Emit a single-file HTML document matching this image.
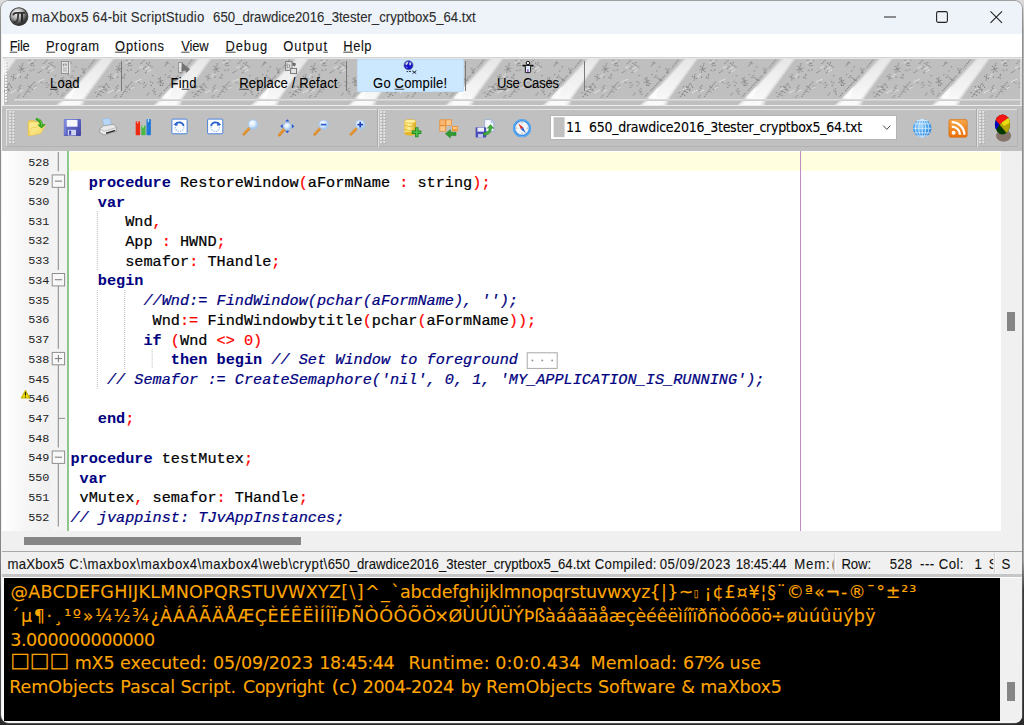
<!DOCTYPE html>
<html><head><meta charset="utf-8"><title>maXbox5</title>
<style>
html,body{margin:0;padding:0}
body{width:1024px;height:725px;position:relative;overflow:hidden;background:linear-gradient(180deg,#dcdcdc 0,#b4b4b4 30px,#a4a4a4 560px,#3a3a3a 590px,#2a2a2a 100%);font-family:"Liberation Sans",sans-serif}
.t{position:absolute;white-space:pre;margin:0;padding:0;transform-origin:0 0;-webkit-text-stroke:0.1px currentColor}
.t u{text-decoration:underline;text-underline-offset:1px;text-decoration-thickness:1px;text-decoration-color:#444}
#win{position:absolute;left:1.4px;top:0.6px;width:1021px;height:722px;background:#f0f0f0;border-radius:8px;overflow:hidden;box-shadow:0 0 0 1px rgba(110,110,110,0.55)}
.code{position:absolute;left:70.4px;white-space:pre;font:15.23px/19.72px "Liberation Mono",monospace;color:#000;height:19.72px;-webkit-text-stroke:0.22px currentColor}
.code b{-webkit-text-stroke:0.05px currentColor}
.code b{color:#000080}
.code i{color:#000080}
.code s{color:#ff0000;text-decoration:none}
.code em{color:#ff0000;font-style:normal}
.ln{position:absolute;left:20px;width:29.3px;text-align:right;font:11.8px/19.72px "Liberation Mono",monospace;color:#222;letter-spacing:-0.1px;height:19.72px}
.con{position:absolute;left:11px;white-space:pre;color:#f5a30a;font:17.5px/24px "Liberation Sans",sans-serif}
svg{position:absolute;overflow:visible}
</style></head><body>

<div id="win"></div>
<div id="clip" style="position:absolute;left:0;top:0;width:1024px;height:725px;clip-path:inset(0.6px 1.7px 2.4px 1.4px round 7px)">
<div style="position:absolute;left:1.4px;top:0.6px;width:1021px;height:33.2px;background:#eef3f9;border-radius:8px 8px 0 0"></div>
<div style="position:absolute;left:2px;top:34px;width:1020px;height:23px;background:#ffffff;"></div>
<div style="position:absolute;left:2px;top:57px;width:1020px;height:1px;background:#d4d4d4;"></div>
<div style="position:absolute;left:2px;top:58px;width:1020px;height:1px;background:#f4f4f4;"></div>
<svg style="left:9px;top:7px" width="20" height="20" viewBox="9 7 20 20"><defs><radialGradient id="ig" cx="0.38" cy="0.28" r="0.72"><stop offset="0" stop-color="#f6f6f6"/><stop offset="0.45" stop-color="#b4b4b4"/><stop offset="0.8" stop-color="#4a4a4a"/><stop offset="1" stop-color="#262626"/></radialGradient></defs><circle cx="18.9" cy="16.6" r="8.9" fill="url(#ig)" stroke="#3c3c3c" stroke-width="1.1"/><path d="M13.2 15.4 Q13.6 12.9 16.4 12.9 L25.2 12.9" fill="none" stroke="#303030" stroke-width="1.6"/><path d="M18.2 13.2 Q18.2 19.6 16.6 21.4 Q15.4 22.6 13.6 21.4" fill="none" stroke="#383838" stroke-width="1.8"/><path d="M22 13.2 L22 22.6" fill="none" stroke="#2a2a2a" stroke-width="2"/></svg>
<div id="title" class="t" style="left:31px;top:2px;font:normal normal 14.2px/28.4px 'Liberation Sans',sans-serif;color:#2c2c2c;letter-spacing:0.233px;transform:translate(0.45px,0.80px) scaleX(0.93);">maXbox5 64-bit ScriptStudio</div>
<div id="title2" class="t" style="left:213px;top:2px;font:normal normal 14.2px/28.4px 'Liberation Sans',sans-serif;color:#2c2c2c;letter-spacing:-0.019px;transform:translate(0.10px,0.80px) scaleX(0.93);">650_drawdice2016_3tester_cryptbox5_64.txt</div>
<svg style="left:0;top:0" width="1024" height="34" viewBox="0 0 1024 34"><g fill="none" stroke="#222" stroke-width="1.1"><path d="M884 17H896"/><rect x="936.6" y="11.6" width="10.8" height="10.8" rx="1.6"/><path d="M990.5 11.3L1002 22.8M1002 11.3L990.5 22.8"/></g></svg>
<div id="m1" class="t" style="left:9px;top:32px;font:normal normal 13.9px/27.8px 'Liberation Sans',sans-serif;color:#111;letter-spacing:-0.284px;transform:translate(0.70px,0.70px) scaleX(0.93);"><u>F</u>ile</div>
<div id="m2" class="t" style="left:45px;top:32px;font:normal normal 13.9px/27.8px 'Liberation Sans',sans-serif;color:#111;letter-spacing:0.625px;transform:translate(0.90px,0.70px) scaleX(0.93);"><u>P</u>rogram</div>
<div id="m3" class="t" style="left:115px;top:32px;font:normal normal 13.9px/27.8px 'Liberation Sans',sans-serif;color:#111;letter-spacing:0.792px;transform:translate(0.10px,0.70px) scaleX(0.93);"><u>O</u>ptions</div>
<div id="m4" class="t" style="left:181px;top:32px;font:normal normal 13.9px/27.8px 'Liberation Sans',sans-serif;color:#111;letter-spacing:-0.167px;transform:translate(0.30px,0.70px) scaleX(0.93);"><u>V</u>iew</div>
<div id="m5" class="t" style="left:225px;top:32px;font:normal normal 13.9px/27.8px 'Liberation Sans',sans-serif;color:#111;letter-spacing:1.000px;transform:translate(0.40px,0.70px) scaleX(0.93);"><u>D</u>ebug</div>
<div id="m6" class="t" style="left:283px;top:32px;font:normal normal 13.9px/27.8px 'Liberation Sans',sans-serif;color:#111;letter-spacing:1.050px;transform:translate(0.30px,0.70px) scaleX(0.93);">Outpu<u>t</u></div>
<div id="m7" class="t" style="left:343px;top:32px;font:normal normal 13.9px/27.8px 'Liberation Sans',sans-serif;color:#111;letter-spacing:0.583px;transform:translate(0.30px,0.70px) scaleX(0.93);"><u>H</u>elp</div>
<svg style="left:3px;top:59px" width="1018" height="46" viewBox="3 59 1018 46">
<defs>
<pattern id="dz" width="2.4" height="2.4" patternUnits="userSpaceOnUse"><rect width="1.2" height="1.2" fill="#fff"/><rect x="1.2" y="1.2" width="1.2" height="1.2" fill="#fff"/></pattern>
<linearGradient id="sgo" gradientUnits="userSpaceOnUse" x1="0" y1="0" x2="0" y2="46"><stop offset="0" stop-color="#fff" stop-opacity="0.08"/><stop offset="0.7" stop-color="#fff" stop-opacity="0.2"/><stop offset="1" stop-color="#fff" stop-opacity="0.3"/></linearGradient>
<linearGradient id="sgm" gradientUnits="userSpaceOnUse" x1="0" y1="0" x2="0" y2="46"><stop offset="0" stop-color="#fff" stop-opacity="0.16"/><stop offset="0.7" stop-color="#fff" stop-opacity="0.34"/><stop offset="1" stop-color="#fff" stop-opacity="0.5"/></linearGradient>
<linearGradient id="sgc" gradientUnits="userSpaceOnUse" x1="0" y1="0" x2="0" y2="46"><stop offset="0" stop-color="#fff" stop-opacity="0.2"/><stop offset="0.7" stop-color="#fff" stop-opacity="0.5"/><stop offset="1" stop-color="#fff" stop-opacity="0.7"/></linearGradient>
<pattern id="tx" x="16.90" y="59" width="97.3" height="46" patternUnits="userSpaceOnUse">
<rect width="97.3" height="46" fill="#bfbfbf"/>
<polygon points="82.7,0.0 97.3,0.0 69.0,39.0 66.3,46.0 39.5,46.0 46.9,39.0 52.3,33.5" fill="url(#sgo)"/><polygon points="82.7,0.0 97.3,0.0 69.0,39.0 66.3,46.0 39.5,46.0 46.9,39.0 52.3,33.5" fill="url(#dz)" fill-opacity="0.45"/><polygon points="84.5,0.0 95.9,0.0 67.5,39.0 63.8,46.0 41.3,46.0 48.7,39.0 54.3,32.5" fill="url(#sgm)"/><polygon points="84.5,0.0 95.9,0.0 67.5,39.0 63.8,46.0 41.3,46.0 48.7,39.0 54.3,32.5" fill="url(#dz)" fill-opacity="0.45"/><polygon points="85.9,0.0 94.7,0.0 65.7,39.0 61.3,46.0 43.8,46.0 50.8,39.0 56.8,31.0" fill="url(#sgc)"/><polygon points="47.1,39.0 51.9,33.8 58.8,27.0 54.8,39.0" fill="#fff" fill-opacity="0.75"/><polygon points="-14.6,0.0 0.0,0.0 -28.3,39.0 -31.0,46.0 -57.8,46.0 -50.4,39.0 -45.0,33.5" fill="url(#sgo)"/><polygon points="-14.6,0.0 0.0,0.0 -28.3,39.0 -31.0,46.0 -57.8,46.0 -50.4,39.0 -45.0,33.5" fill="url(#dz)" fill-opacity="0.45"/><polygon points="-12.8,0.0 -1.4,0.0 -29.8,39.0 -33.5,46.0 -56.0,46.0 -48.6,39.0 -43.0,32.5" fill="url(#sgm)"/><polygon points="-12.8,0.0 -1.4,0.0 -29.8,39.0 -33.5,46.0 -56.0,46.0 -48.6,39.0 -43.0,32.5" fill="url(#dz)" fill-opacity="0.45"/><polygon points="-11.4,0.0 -2.6,0.0 -31.6,39.0 -36.0,46.0 -53.5,46.0 -46.5,39.0 -40.5,31.0" fill="url(#sgc)"/><polygon points="-50.2,39.0 -45.4,33.8 -38.5,27.0 -42.5,39.0" fill="#fff" fill-opacity="0.75"/>
<g stroke="#727272" stroke-width="1" fill="none" stroke-dasharray="1.3 0.9" opacity="0.85"><path d="M53.8 2.8 L49.8 8.0 M77.8 0.6 L70.8 9.5 M65.3 9.0 L67.8 14.5 M68.8 9.5 L65.8 15.0 M64.1 16.6 L55.8 25.6 M58.3 20.0 L61.3 22.0 M44.3 19.0 L48.3 25.0 M43.3 23.5 L49.8 21.0 M46.3 18.0 L45.8 27.0 M55.3 26.0 L49.3 32.5 M47.3 34.0 L44.3 38.0 M79.3 38.0 L89.3 25.0 M82.3 31.0 L87.3 34.0 M85.3 27.0 L90.3 31.0 M81.3 35.0 L85.3 37.0 M89.3 24.0 L92.3 29.0 M91.3 17.0 L96.3 20.0 M94.3 15.0 L93.3 22.0 M2.3 7.0 L7.3 13.0 M1.3 11.0 L8.3 9.0 M5.3 6.0 L3.3 14.0 M12.3 1.0 L16.3 5.0 M18.3 1.0 L13.3 6.0 M-6.7 17.0 L-1.7 22.0 M-2.7 16.0 L-5.7 23.0 M6.3 38.0 L15.3 25.0 M11.3 27.0 L16.3 31.0 M16.3 30.0 L19.3 26.0 M10.3 32.0 L13.3 33.0 M26.3 5.0 L30.3 1.0 M35.3 3.0 L33.3 7.0 M21.3 14.0 L25.3 11.0 M29.3 29.0 L32.3 25.0 M38.3 31.0 L41.3 36.0 M8.3 19.0 L11.3 16.0 M3.3 29.0 L0.8 33.0 M31.4 7.4 L29.1 10.1 M51.7 15.2 L50.7 16.4 M3.9 17.6 L2.8 18.9 M41.1 31.8 L39.8 33.2 M55.7 16.3 L52.8 19.6 M14.1 6.2 L16.1 7.5 M17.6 22.9 L15.4 25.5 M52.9 4.3 L51.8 5.5 M30.5 23.1 L28.6 25.3 M23.7 22.7 L26.2 24.2 M40.4 29.3 L39.2 30.7 M4.1 26.1 L1.6 28.9 M56.0 18.4 L59.2 20.4 M45.8 25.9 L47.2 26.8 M37.3 26.1 L36.3 27.3 M16.4 6.2 L17.8 7.1 M12.7 10.9 L14.9 12.3 M8.0 18.2 L10.6 19.7 M79.0 33.1 L77.4 34.9 M34.7 33.8 L31.9 37.2 M17.2 10.4 L15.8 12.0 M56.9 11.5 L55.9 12.6 M35.7 22.4 L39.2 24.6 M49.8 24.2 L47.5 26.9 M86.7 30.1 L90.0 32.1 M38.0 16.4 L39.4 17.3 M6.3 4.4 L4.9 6.0 M32.9 3.9 L32.0 5.0 M10.0 15.1 L11.3 15.9 M59.3 7.3 L57.8 9.1 M35.3 6.4 L38.5 8.4 M45.0 19.4 L43.9 20.8 M33.2 11.5 L30.6 14.6 M2.5 36.2 L0.5 38.6 M52.4 3.0 L54.9 4.5 M83.2 27.1 L81.7 28.8"/></g>
<g stroke="#ececec" stroke-width="1.2" fill="none" stroke-dasharray="1.4 1"><path d="M11.3 4.0 L17.3 1.5 M33.3 12.5 L37.3 10.5 M21.3 23.0 L27.3 20.0 M0.3 18.0 L2.3 15.0 M91.3 34.0 L96.3 31.0 M2.3 32.5 L6.8 30.5 M25.3 9.0 L28.3 7.5 M16.3 29.8 L19.4 28.1 M31.9 10.0 L35.6 8.0 M82.2 31.0 L85.8 29.3"/></g>
</pattern></defs>
<rect x="3" y="59" width="1018" height="46" fill="url(#tx)"/>
</svg>
<div style="position:absolute;left:3px;top:59px;width:1px;height:46px;background:#f8f8f8;"></div>
<div style="position:absolute;left:3px;top:58px;width:1018px;height:1px;background:#e6e6e6;"></div>
<div style="position:absolute;left:14px;top:99px;width:1006px;height:1px;background:#dcdcdc;"></div>
<div style="position:absolute;left:14px;top:100px;width:1006px;height:0.6px;background:#cfcfcf;"></div>
<div style="position:absolute;left:3px;top:104.5px;width:1018px;height:1.2px;background:#ececec;"></div>
<div style="position:absolute;left:1020px;top:59px;width:2px;height:46px;background:#dadada;"></div>
<svg style="left:5px;top:61px" width="4" height="42"><g fill="#f6f6f6"><rect x="0" y="0" width="2" height="2"/><rect x="0" y="3" width="2" height="2"/><rect x="0" y="6" width="2" height="2"/><rect x="0" y="9" width="2" height="2"/><rect x="0" y="12" width="2" height="2"/><rect x="0" y="15" width="2" height="2"/><rect x="0" y="18" width="2" height="2"/><rect x="0" y="21" width="2" height="2"/><rect x="0" y="24" width="2" height="2"/><rect x="0" y="27" width="2" height="2"/><rect x="0" y="30" width="2" height="2"/><rect x="0" y="33" width="2" height="2"/><rect x="0" y="36" width="2" height="2"/><rect x="0" y="39" width="2" height="2"/></g><g fill="#9a9a9a"><rect x="1.5" y="1.5" width="1" height="1"/><rect x="1.5" y="4.5" width="1" height="1"/><rect x="1.5" y="7.5" width="1" height="1"/><rect x="1.5" y="10.5" width="1" height="1"/><rect x="1.5" y="13.5" width="1" height="1"/><rect x="1.5" y="16.5" width="1" height="1"/><rect x="1.5" y="19.5" width="1" height="1"/><rect x="1.5" y="22.5" width="1" height="1"/><rect x="1.5" y="25.5" width="1" height="1"/><rect x="1.5" y="28.5" width="1" height="1"/><rect x="1.5" y="31.5" width="1" height="1"/><rect x="1.5" y="34.5" width="1" height="1"/><rect x="1.5" y="37.5" width="1" height="1"/><rect x="1.5" y="40.5" width="1" height="1"/></g></svg>
<div style="position:absolute;left:120.7px;top:61px;width:1px;height:30.2px;background:#7a7a7a;"></div>
<div style="position:absolute;left:346.2px;top:61px;width:1px;height:30.2px;background:#7a7a7a;"></div>
<div style="position:absolute;left:465.1px;top:61px;width:1px;height:30.2px;background:#7a7a7a;"></div>
<div style="position:absolute;left:583.9px;top:61px;width:1px;height:30.2px;background:#7a7a7a;"></div>
<div style="position:absolute;left:356.5px;top:59.2px;width:107.4px;height:33px;background:#cce8ff;border-radius:3px;box-shadow:inset 0 0 0 1px #c0defa"></div>
<div id="b1" class="t" style="left:50px;top:68px;font:normal normal 14.0px/28.0px 'Liberation Sans',sans-serif;color:#000;letter-spacing:0.183px;transform:translate(0.10px,0.75px) scaleX(0.93);"><u>L</u>oad</div>
<div id="b2" class="t" style="left:170px;top:68px;font:normal normal 14.0px/28.0px 'Liberation Sans',sans-serif;color:#000;letter-spacing:0.167px;transform:translate(0.60px,0.75px) scaleX(0.93);">Fi<u>n</u>d</div>
<div id="b3" class="t" style="left:239px;top:68px;font:normal normal 14.0px/28.0px 'Liberation Sans',sans-serif;color:#000;letter-spacing:0.134px;transform:translate(0.30px,0.75px) scaleX(0.93);"><u>R</u>eplace / Refact</div>
<div id="b4" class="t" style="left:373px;top:68px;font:normal normal 14.0px/28.0px 'Liberation Sans',sans-serif;color:#000;letter-spacing:0.175px;transform:translate(0.10px,0.75px) scaleX(0.93);">Go <u>C</u>ompile!</div>
<div id="b5" class="t" style="left:497px;top:68px;font:normal normal 14.0px/28.0px 'Liberation Sans',sans-serif;color:#000;letter-spacing:-0.250px;transform:translate(0.10px,0.75px) scaleX(0.93);"><u>U</u>se Cases</div>
<svg style="left:0;top:58px" width="1024" height="20" viewBox="0 58 1024 20">
<g><rect x="61.4" y="61.6" width="7" height="11.8" fill="#c6c6c6" stroke="#8c8c8c" stroke-width="1"/><rect x="62.4" y="62.6" width="5" height="9.8" fill="none" stroke="#e6e6e6" stroke-width="1"/><path d="M69.6 62V73.6" stroke="#ececec" stroke-width="1"/><path d="M63.4 64.2v1.4M66 64.2v1.4" stroke="#777" stroke-width="1"/><path d="M63.6 66.4H66.6" stroke="#f4f4f4" stroke-width="0.9"/></g>
<g><rect x="178.4" y="62.6" width="3.8" height="9.8" fill="#dcdcdc" stroke="#8a8a8a" stroke-width="0.8"/><path d="M179.2 64.2h2.4M179.2 66.4h3.4M179.2 69.6h2.2" stroke="#f8f8f8" stroke-width="0.9"/><path d="M181.8 62.6 L190 69.2 L186.2 73 L185.6 70.6 L181.4 71.2 Z" fill="#747474"/></g>
<g><rect x="285.6" y="61.6" width="6.4" height="8.8" fill="#dedede" stroke="#777" stroke-width="0.9"/><path d="M287.2 63.4v5M288.8 64.2q2 1.4 0 4" stroke="#777" stroke-width="0.8" fill="none"/><rect x="290.6" y="68.4" width="6" height="5.2" fill="#e4e4e4" stroke="#6e6e6e" stroke-width="0.9"/><path d="M292.2 62.2 L296 63.4 L295 66.4 L292.6 65.6 Z" fill="#6a6a6a"/></g>
<g><circle cx="408.5" cy="65.2" r="4.5" fill="#1414cc"/><path d="M405.2 63.4 q1.6 -2.2 3.2 -1.8 l-0.6 2.4 l-1.8 1.6 Z M409.4 62 l2 0.8 l-0.6 2.6 l-1.6 -0.4 Z M405.6 66.6 l1.6 0.4 l0.2 1.4 Z" fill="#c8ccd8"/><circle cx="408.5" cy="65.2" r="4.5" fill="none" stroke="#55608a" stroke-width="0.7"/><path d="M406.6 71.6 h1.6 M409 71.4 h2 M412.2 70.8 l4 2.8 M416.4 70.6 l-3.8 3" stroke="#222a3a" stroke-width="1"/></g>
<g><circle cx="527.9" cy="63" r="1.7" fill="#f4f4f4" stroke="#111" stroke-width="1"/><path d="M523.2 65.6 H532.8" stroke="#111" stroke-width="1.8" stroke-linecap="round"/><rect x="525.4" y="65.4" width="5.2" height="7.2" rx="0.8" fill="#dfeaff" stroke="#111" stroke-width="1"/><path d="M527.9 69.2v3" stroke="#8a3fa8" stroke-width="1.2"/></g>
</svg>
<div style="position:absolute;left:2px;top:105.5px;width:1020px;height:45px;background:#c0c0c0;"></div>
<div style="position:absolute;left:6px;top:109px;width:1012px;height:1px;background:#e2e2e2;"></div>
<div style="position:absolute;left:6px;top:109px;width:1px;height:37.5px;background:#e2e2e2;"></div>
<div style="position:absolute;left:6px;top:146px;width:1012px;height:1px;background:#b2b2b2;"></div>
<div style="position:absolute;left:1017px;top:109px;width:1px;height:37.5px;background:#b2b2b2;"></div>
<div style="position:absolute;left:377.5px;top:109px;width:1px;height:37.5px;background:#e2e2e2;"></div>
<div style="position:absolute;left:376.5px;top:109px;width:1px;height:37.5px;background:#aaaaaa;"></div>
<div style="position:absolute;left:976.5px;top:109px;width:1px;height:37.5px;background:#e2e2e2;"></div>
<div style="position:absolute;left:975.5px;top:109px;width:1px;height:37.5px;background:#aaaaaa;"></div>
<svg style="left:8.6px;top:111px" width="7" height="33"><g fill="#e4e4e4"><rect x="0.0" y="0" width="2" height="2"/><rect x="3.4" y="0" width="2" height="2"/><rect x="0.0" y="3" width="2" height="2"/><rect x="3.4" y="3" width="2" height="2"/><rect x="0.0" y="6" width="2" height="2"/><rect x="3.4" y="6" width="2" height="2"/><rect x="0.0" y="9" width="2" height="2"/><rect x="3.4" y="9" width="2" height="2"/><rect x="0.0" y="12" width="2" height="2"/><rect x="3.4" y="12" width="2" height="2"/><rect x="0.0" y="15" width="2" height="2"/><rect x="3.4" y="15" width="2" height="2"/><rect x="0.0" y="18" width="2" height="2"/><rect x="3.4" y="18" width="2" height="2"/><rect x="0.0" y="21" width="2" height="2"/><rect x="3.4" y="21" width="2" height="2"/><rect x="0.0" y="24" width="2" height="2"/><rect x="3.4" y="24" width="2" height="2"/><rect x="0.0" y="27" width="2" height="2"/><rect x="3.4" y="27" width="2" height="2"/><rect x="0.0" y="30" width="2" height="2"/><rect x="3.4" y="30" width="2" height="2"/></g><g fill="#a4a4a4"><rect x="1.6" y="1.6" width="1" height="1"/><rect x="5.0" y="1.6" width="1" height="1"/><rect x="1.6" y="4.6" width="1" height="1"/><rect x="5.0" y="4.6" width="1" height="1"/><rect x="1.6" y="7.6" width="1" height="1"/><rect x="5.0" y="7.6" width="1" height="1"/><rect x="1.6" y="10.6" width="1" height="1"/><rect x="5.0" y="10.6" width="1" height="1"/><rect x="1.6" y="13.6" width="1" height="1"/><rect x="5.0" y="13.6" width="1" height="1"/><rect x="1.6" y="16.6" width="1" height="1"/><rect x="5.0" y="16.6" width="1" height="1"/><rect x="1.6" y="19.6" width="1" height="1"/><rect x="5.0" y="19.6" width="1" height="1"/><rect x="1.6" y="22.6" width="1" height="1"/><rect x="5.0" y="22.6" width="1" height="1"/><rect x="1.6" y="25.6" width="1" height="1"/><rect x="5.0" y="25.6" width="1" height="1"/><rect x="1.6" y="28.6" width="1" height="1"/><rect x="5.0" y="28.6" width="1" height="1"/><rect x="1.6" y="31.6" width="1" height="1"/><rect x="5.0" y="31.6" width="1" height="1"/></g></svg>
<svg style="left:380.2px;top:111px" width="7" height="33"><g fill="#e4e4e4"><rect x="0.0" y="0" width="2" height="2"/><rect x="3.4" y="0" width="2" height="2"/><rect x="0.0" y="3" width="2" height="2"/><rect x="3.4" y="3" width="2" height="2"/><rect x="0.0" y="6" width="2" height="2"/><rect x="3.4" y="6" width="2" height="2"/><rect x="0.0" y="9" width="2" height="2"/><rect x="3.4" y="9" width="2" height="2"/><rect x="0.0" y="12" width="2" height="2"/><rect x="3.4" y="12" width="2" height="2"/><rect x="0.0" y="15" width="2" height="2"/><rect x="3.4" y="15" width="2" height="2"/><rect x="0.0" y="18" width="2" height="2"/><rect x="3.4" y="18" width="2" height="2"/><rect x="0.0" y="21" width="2" height="2"/><rect x="3.4" y="21" width="2" height="2"/><rect x="0.0" y="24" width="2" height="2"/><rect x="3.4" y="24" width="2" height="2"/><rect x="0.0" y="27" width="2" height="2"/><rect x="3.4" y="27" width="2" height="2"/><rect x="0.0" y="30" width="2" height="2"/><rect x="3.4" y="30" width="2" height="2"/></g><g fill="#a4a4a4"><rect x="1.6" y="1.6" width="1" height="1"/><rect x="5.0" y="1.6" width="1" height="1"/><rect x="1.6" y="4.6" width="1" height="1"/><rect x="5.0" y="4.6" width="1" height="1"/><rect x="1.6" y="7.6" width="1" height="1"/><rect x="5.0" y="7.6" width="1" height="1"/><rect x="1.6" y="10.6" width="1" height="1"/><rect x="5.0" y="10.6" width="1" height="1"/><rect x="1.6" y="13.6" width="1" height="1"/><rect x="5.0" y="13.6" width="1" height="1"/><rect x="1.6" y="16.6" width="1" height="1"/><rect x="5.0" y="16.6" width="1" height="1"/><rect x="1.6" y="19.6" width="1" height="1"/><rect x="5.0" y="19.6" width="1" height="1"/><rect x="1.6" y="22.6" width="1" height="1"/><rect x="5.0" y="22.6" width="1" height="1"/><rect x="1.6" y="25.6" width="1" height="1"/><rect x="5.0" y="25.6" width="1" height="1"/><rect x="1.6" y="28.6" width="1" height="1"/><rect x="5.0" y="28.6" width="1" height="1"/><rect x="1.6" y="31.6" width="1" height="1"/><rect x="5.0" y="31.6" width="1" height="1"/></g></svg>
<svg style="left:979px;top:111px" width="7" height="33"><g fill="#e4e4e4"><rect x="0.0" y="0" width="2" height="2"/><rect x="3.4" y="0" width="2" height="2"/><rect x="0.0" y="3" width="2" height="2"/><rect x="3.4" y="3" width="2" height="2"/><rect x="0.0" y="6" width="2" height="2"/><rect x="3.4" y="6" width="2" height="2"/><rect x="0.0" y="9" width="2" height="2"/><rect x="3.4" y="9" width="2" height="2"/><rect x="0.0" y="12" width="2" height="2"/><rect x="3.4" y="12" width="2" height="2"/><rect x="0.0" y="15" width="2" height="2"/><rect x="3.4" y="15" width="2" height="2"/><rect x="0.0" y="18" width="2" height="2"/><rect x="3.4" y="18" width="2" height="2"/><rect x="0.0" y="21" width="2" height="2"/><rect x="3.4" y="21" width="2" height="2"/><rect x="0.0" y="24" width="2" height="2"/><rect x="3.4" y="24" width="2" height="2"/><rect x="0.0" y="27" width="2" height="2"/><rect x="3.4" y="27" width="2" height="2"/><rect x="0.0" y="30" width="2" height="2"/><rect x="3.4" y="30" width="2" height="2"/></g><g fill="#a4a4a4"><rect x="1.6" y="1.6" width="1" height="1"/><rect x="5.0" y="1.6" width="1" height="1"/><rect x="1.6" y="4.6" width="1" height="1"/><rect x="5.0" y="4.6" width="1" height="1"/><rect x="1.6" y="7.6" width="1" height="1"/><rect x="5.0" y="7.6" width="1" height="1"/><rect x="1.6" y="10.6" width="1" height="1"/><rect x="5.0" y="10.6" width="1" height="1"/><rect x="1.6" y="13.6" width="1" height="1"/><rect x="5.0" y="13.6" width="1" height="1"/><rect x="1.6" y="16.6" width="1" height="1"/><rect x="5.0" y="16.6" width="1" height="1"/><rect x="1.6" y="19.6" width="1" height="1"/><rect x="5.0" y="19.6" width="1" height="1"/><rect x="1.6" y="22.6" width="1" height="1"/><rect x="5.0" y="22.6" width="1" height="1"/><rect x="1.6" y="25.6" width="1" height="1"/><rect x="5.0" y="25.6" width="1" height="1"/><rect x="1.6" y="28.6" width="1" height="1"/><rect x="5.0" y="28.6" width="1" height="1"/><rect x="1.6" y="31.6" width="1" height="1"/><rect x="5.0" y="31.6" width="1" height="1"/></g></svg>
<svg style="left:0;top:105px" width="1024" height="46" viewBox="0 105 1024 46"><defs>
<linearGradient id="gy" x1="0" y1="0" x2="1" y2="1"><stop offset="0" stop-color="#fff3a6"/><stop offset="1" stop-color="#f2d054"/></linearGradient>
<linearGradient id="gfl" x1="0" y1="0" x2="1" y2="1"><stop offset="0" stop-color="#7684dc"/><stop offset="1" stop-color="#4040a4"/></linearGradient>
<radialGradient id="glens" cx="0.4" cy="0.35" r="0.7"><stop offset="0" stop-color="#ffffff"/><stop offset="0.6" stop-color="#cfe4fa"/><stop offset="1" stop-color="#86b6ee"/></radialGradient>
<radialGradient id="gglobe" cx="0.4" cy="0.35" r="0.75"><stop offset="0" stop-color="#9fd4ff"/><stop offset="0.6" stop-color="#3d9bea"/><stop offset="1" stop-color="#1c6fd0"/></radialGradient>
<linearGradient id="grss" x1="0" y1="0" x2="0" y2="1"><stop offset="0" stop-color="#f7a646"/><stop offset="1" stop-color="#e9700a"/></linearGradient>
<linearGradient id="gcyl" x1="0" y1="0" x2="1" y2="0"><stop offset="0" stop-color="#f6d24a"/><stop offset="0.4" stop-color="#fff3a0"/><stop offset="1" stop-color="#dba91c"/></linearGradient>
</defs><g>
<path d="M28.1 121.6 L29.4 120.4 L34 120.4 L35.2 121.6 L40 121.8 L40 129 L32 135 L28.1 135.4 Z" fill="#f2d255" stroke="#e4b93a" stroke-width="0.5"/>
<path d="M29.2 122.4 L39 122.6 L39 126.4 L31.6 127.6 L29.2 133 Z" fill="#fbe98e"/>
<path d="M28.7 135.5 L31.4 128.2 L45.5 125.1 L40.8 133.6 L31.5 135.6 Z" fill="url(#gy)" stroke="#e9c54a" stroke-width="0.5"/>
<path d="M36 118 Q41.6 118 42.9 124.3 L45.7 124.2 L41.6 128.4 L37.3 124.5 L39.8 124.4 Q39.2 121.2 35.6 120 Z" fill="#2c9e1c"/>
<path d="M37.4 118.8 Q41 119.4 41.6 124.6 L41.6 126.6" fill="none" stroke="#74cf52" stroke-width="0.9"/>
</g><g>
<rect x="63.8" y="119.1" width="17.2" height="16.9" rx="1" fill="url(#gfl)"/>
<rect x="66.7" y="119.9" width="10.8" height="6.8" fill="#f4f6fb"/>
<rect x="67.8" y="129.8" width="8.2" height="5.6" fill="#cfd4ee"/>
<rect x="69" y="130.6" width="2.2" height="4.2" fill="#4a4ab0"/>
<rect x="64.6" y="119.9" width="1" height="15" fill="#8c96e6" opacity="0.8"/>
</g><g>
<path d="M102.5 119.2 L109.5 118.2 L111.8 126.2 L104.6 127.6 Z" fill="#b5d6f6" stroke="#8ab8e8" stroke-width="0.5"/>
<path d="M99.8 128.8 L103.5 125.8 L113.6 124.4 L116.6 127.2 L116.6 131.2 L104.2 135 L99.8 132.6 Z" fill="#e9e9e9" stroke="#8e8e8e" stroke-width="0.7"/>
<path d="M99.8 128.8 L104.4 131.2 L116.6 127.4" fill="none" stroke="#a0a0a0" stroke-width="0.6"/>
<path d="M106 132.6 L115.2 129.8 L115.2 131.2 L106 134 Z" fill="#2c2c2c"/>
</g><g>
<rect x="135.7" y="121.3" width="4.4" height="14" rx="0.8" fill="#ee2a10"/>
<rect x="136.9" y="121.3" width="1.4" height="2" fill="#f8b8a0"/>
<rect x="141.2" y="125.6" width="4.4" height="9.7" rx="0.8" fill="#4cb848"/>
<rect x="142.4" y="125.6" width="1.4" height="2" fill="#c8f0c0"/>
<rect x="146.5" y="119.1" width="4.4" height="16.2" rx="0.8" fill="#1e78d8"/>
<rect x="147.7" y="119.1" width="1.4" height="3" fill="#b8dcff"/>
</g><g><rect x="171.9" y="119.1" width="15.2" height="14.7" rx="0.9" fill="#fdfdfe" stroke="#4a82da" stroke-width="1"/><circle cx="179.5" cy="127.2" r="4.3" fill="none" stroke="#9cc2f2" stroke-width="1.3" stroke-dasharray="1.3 1.1"/><path d="M175.2 124.6 A4.6 4.6 0 0 1 183.7 126" fill="none" stroke="#2c66cc" stroke-width="1.7"/><path d="M173.5 124.8 L177.3 121.4 L177.5 126 Z" fill="#2c66cc"/></g><g><rect x="207.6" y="119.1" width="15.2" height="14.7" rx="0.9" fill="#fdfdfe" stroke="#4a82da" stroke-width="1"/><circle cx="215.2" cy="127.2" r="4.3" fill="none" stroke="#9cc2f2" stroke-width="1.3" stroke-dasharray="1.3 1.1"/><path d="M219.5 124.6 A4.6 4.6 0 0 0 211.0 126" fill="none" stroke="#2c66cc" stroke-width="1.7"/><path d="M221.2 124.8 L217.39999999999998 121.4 L217.2 126 Z" fill="#2c66cc"/></g><g><path d="M249.7 127.8 L243.8 134.2" stroke="#d9831c" stroke-width="2.6" stroke-linecap="round"/><path d="M249.7 127.4 L243.8 133.79999999999998" stroke="#f4b050" stroke-width="0.9" stroke-linecap="round"/><circle cx="253" cy="124.3" r="4.6" fill="url(#glens)" stroke="#a9c8ee" stroke-width="1.1"/></g><g><path d="M284.7 129.0 L279.2 135" stroke="#d9831c" stroke-width="2.6" stroke-linecap="round"/><path d="M284.7 128.6 L279.2 134.6" stroke="#f4b050" stroke-width="0.9" stroke-linecap="round"/><circle cx="287.3" cy="126.2" r="3.6" fill="url(#glens)" stroke="#a9c8ee" stroke-width="1.1"/><path d="M287.3 119.2 L285.1 121.60000000000001 L289.5 121.60000000000001 Z" fill="#2458d4"/><path d="M287.3 133.2 L285.1 130.79999999999998 L289.5 130.79999999999998 Z" fill="#2458d4"/><path d="M280.3 126.2 L282.7 124.0 L282.7 128.4 Z" fill="#2458d4"/><path d="M294.3 126.2 L291.90000000000003 124.0 L291.90000000000003 128.4 Z" fill="#2458d4"/></g><g><path d="M320.4 128.1 L314.6 134.4" stroke="#d9831c" stroke-width="2.6" stroke-linecap="round"/><path d="M320.4 127.7 L314.6 134.0" stroke="#f4b050" stroke-width="0.9" stroke-linecap="round"/><circle cx="323.6" cy="124.6" r="4.6" fill="url(#glens)" stroke="#a9c8ee" stroke-width="1.1"/><path d="M320.8 124.6H326.40000000000003" stroke="#2a5fd0" stroke-width="1.7"/></g><g><path d="M356.9 128.1 L350.8 134.4" stroke="#d9831c" stroke-width="2.6" stroke-linecap="round"/><path d="M356.9 127.7 L350.8 134.0" stroke="#f4b050" stroke-width="0.9" stroke-linecap="round"/><circle cx="360.2" cy="124.6" r="4.6" fill="url(#glens)" stroke="#a9c8ee" stroke-width="1.1"/><path d="M357.4 124.6H363.0M360.2 121.8V127.39999999999999" stroke="#1c44b8" stroke-width="1.7"/></g><g>
<rect x="404.4" y="121.2" width="11.6" height="12.4" fill="url(#gcyl)"/>
<ellipse cx="410.2" cy="133.6" rx="5.8" ry="1.9" fill="#e2b52a"/>
<ellipse cx="410.2" cy="121.3" rx="5.8" ry="1.9" fill="#fff0a0" stroke="#dcae28" stroke-width="0.6"/>
<path d="M404.4 125.4 Q410.2 128 416 125.4 M404.4 129.4 Q410.2 132 416 129.4" fill="none" stroke="#d6a624" stroke-width="0.7"/>
<path d="M416.8 127.2 V137.2 M411.8 132.2 H421.4" stroke="#1f8a1f" stroke-width="3.4"/>
<path d="M416.8 128 V136.4 M412.6 132.2 H420.6" stroke="#4cc24c" stroke-width="1.6"/>
</g><g>
<rect x="439.4" y="119.4" width="12.6" height="12.2" fill="#ec8f34"/>
<rect x="440.2" y="120.2" width="5" height="4.8" fill="#f6b672"/><rect x="446.4" y="120.2" width="4.8" height="4.8" fill="#f9c88a"/>
<rect x="440.2" y="126.2" width="5" height="4.8" fill="#f9c88a"/>
<rect x="446.2" y="125.6" width="6" height="6.2" fill="#c0c0c0"/>
<rect x="452" y="126" width="6" height="5.2" fill="#f29a3e"/><rect x="453" y="127" width="4" height="2" fill="#f9c88a"/>
<path d="M445.4 133.8 L450.4 129.6 L450.4 132.2 L456 132.2 L456 135.6 L450.4 135.6 L450.4 138 Z" fill="#2f9a2f" stroke="#1f7a1f" stroke-width="0.5"/>
</g><g>
<path d="M484.6 119.6 L491 119.6 L493.8 122.4 L493.8 131.6 L484.6 131.6 Z" fill="#f6f8fd" stroke="#8aa2d8" stroke-width="0.7"/>
<path d="M491 119.6 L491 122.4 L493.8 122.4" fill="#c8d6f2" stroke="#8aa2d8" stroke-width="0.5"/>
<rect x="475.6" y="127.2" width="10.6" height="10.4" rx="0.8" fill="#4a4eb8"/>
<rect x="477.4" y="127.6" width="6.6" height="4" fill="#eef0fa"/>
<rect x="478" y="134" width="5" height="3.6" fill="#c0c4ea"/>
<path d="M483.6 132.8 Q488.6 132.6 489.4 128.2 L487.2 128.2 L490.6 124.6 L493.6 128.2 L491.6 128.2 Q491.2 135 483.6 135.4 Z" fill="#3fae3f" stroke="#257a25" stroke-width="0.5"/>
</g><g>
<circle cx="522" cy="128.2" r="9.1" fill="#2d8be6"/>
<circle cx="522" cy="128.2" r="8.4" fill="none" stroke="#7cc0ff" stroke-width="0.8"/>
<circle cx="522" cy="128.2" r="6.6" fill="#f2f4f6" stroke="#c8d4e0" stroke-width="0.6"/>
<path d="M518.4 123.4 L523.2 127.4 L520.9 129.2 Z" fill="#e02a2a"/>
<path d="M525.8 133.2 L520.9 129.2 L523.2 127.4 Z" fill="#2a62d0"/>
<g stroke="#909aa6" stroke-width="0.7"><path d="M522 122.2v1.4M522 132.8v1.4M516 128.2h1.4M526.6 128.2h1.4"/></g>
</g><g>
<rect x="550.5" y="115.5" width="346" height="24" fill="#ffffff" stroke="#b4b4b4" stroke-width="1"/>
<rect x="553.6" y="117.2" width="11" height="20" fill="#c0c0c0"/>
<path d="M883.2 125.6 L886.8 129.4 L890.4 125.6" fill="none" stroke="#444" stroke-width="1"/>
</g><g>
<circle cx="922.2" cy="128.3" r="9.2" fill="url(#gglobe)"/>
<g fill="none" stroke="#e4f3ff" stroke-width="0.8" opacity="0.95">
<ellipse cx="922.2" cy="128.3" rx="3.4" ry="9"/><ellipse cx="922.2" cy="128.3" rx="6.8" ry="9"/>
<path d="M922.2 119.2V137.4M913.2 128.3H931.2M914.4 123.8H930M914.4 132.8H930M916.6 120.6H927.8M916.6 136H927.8"/>
</g></g><g>
<rect x="948.9" y="119.4" width="18.3" height="17.9" rx="2" fill="url(#grss)" stroke="#d8690c" stroke-width="0.6"/>
<circle cx="953.6" cy="132.8" r="2" fill="#fff"/>
<path d="M951.8 126.6 A8.2 8.2 0 0 1 960 134.8" fill="none" stroke="#fff" stroke-width="2.3"/>
<path d="M951.8 122.2 A12.6 12.6 0 0 1 964.4 134.8" fill="none" stroke="#fff" stroke-width="2.3"/>
</g><g>
<ellipse cx="1003.6" cy="135.8" rx="7.6" ry="6" fill="#84746a"/>
<clipPath id="bc"><ellipse cx="1002.5" cy="124.4" rx="7.6" ry="10"/></clipPath>
<g clip-path="url(#bc)">
<rect x="994" y="113" width="18" height="23" fill="#003a00"/>
<path d="M999.4 124.4 L990 114 L1004 110 L1016 112 L1009 117.6 Z" fill="#f81414"/>
<path d="M999.4 124.4 L1009 117.6 L1016 112 L1016 134 L1007 133.4 Z" fill="#b4a408"/>
<path d="M1001.5 122.8 L1009 117.6 L1011 122 L1004 126 Z" fill="#f4e614" opacity="0.85"/>
<path d="M999.4 124.4 L990 114 L990 132 L996.4 129.6 Z" fill="#0404c4"/>
</g>
</g></svg>
<div id="combo" class="t" style="left:566px;top:113px;font:normal normal 14.0px/28.0px 'DejaVu Sans Condensed','DejaVu Sans',sans-serif;color:#000;letter-spacing:-0.279px;transform:translate(0.05px,0.00px);">11  650_drawdice2016_3tester_cryptbox5_64.txt</div>
<div style="position:absolute;left:2px;top:151px;width:1000px;height:379.5px;background:#ffffff;"></div>
<div style="position:absolute;left:3px;top:151px;width:47px;height:379.5px;background:linear-gradient(90deg,#ffffff 0%,#f6f6f6 45%,#f0f0f0 100%);"></div>
<div style="position:absolute;left:50px;top:151px;width:16.5px;height:379.5px;background:#f3f3f3;"></div>
<div style="position:absolute;left:66.6px;top:151px;width:2px;height:379.5px;background:#8cc88c;"></div>
<div style="position:absolute;left:68.6px;top:151px;width:1.2px;height:379.5px;background:#ffffff;"></div>
<div style="position:absolute;left:70px;top:152.3px;width:929.5px;height:19.119999999999997px;background:#ffffe0;"></div>
<div style="position:absolute;left:800.2px;top:151px;width:1.3px;height:379.5px;background:#c48ac4;"></div>
<div style="position:absolute;left:1000.5px;top:151px;width:21.5px;height:399.5px;background:#f0f0f0;"></div>
<div style="position:absolute;left:1007px;top:312px;width:8.2px;height:18.5px;background:#868686;"></div>
<div style="position:absolute;left:2px;top:530.5px;width:999px;height:20.5px;background:#f0f0f0;"></div>
<div style="position:absolute;left:24px;top:536.5px;width:276.5px;height:8px;background:#868686;"></div>
<div class="ln" style="top:153.60px">528</div>
<div class="ln" style="top:173.32px">529</div>
<div class="code" style="top:173.82px">  <b>procedure</b> RestoreWindow<s>(</s>aFormName <s>:</s> string<s>);</s></div>
<div class="ln" style="top:193.04px">530</div>
<div class="code" style="top:193.54px">   <b>var</b></div>
<div class="ln" style="top:212.76px">531</div>
<div class="code" style="top:213.26px">      Wnd<s>,</s></div>
<div class="ln" style="top:232.48px">532</div>
<div class="code" style="top:232.98px">      App <s>:</s> HWND<s>;</s></div>
<div class="ln" style="top:252.20px">533</div>
<div class="code" style="top:252.70px">      semafor<s>:</s> THandle<s>;</s></div>
<div class="ln" style="top:271.92px">534</div>
<div class="code" style="top:272.42px">   <b>begin</b></div>
<div class="ln" style="top:291.64px">535</div>
<div class="code" style="top:292.14px">        <i>//Wnd:= FindWindow(pchar(aFormName), '');</i></div>
<div class="ln" style="top:311.36px">536</div>
<div class="code" style="top:311.86px">         Wnd<s>:=</s> FindWindowbytitle<s>(</s>pchar<s>(</s>aFormName<s>));</s></div>
<div class="ln" style="top:331.08px">537</div>
<div class="code" style="top:331.58px">        <b>if</b> <s>(</s>Wnd <s>&lt;&gt;</s> <em>0</em><s>)</s></div>
<div class="ln" style="top:350.80px">538</div>
<div class="code" style="top:351.30px">           <b>then begin</b> <i>// Set Window to foreground</i></div>
<div class="ln" style="top:370.52px">545</div>
<div class="code" style="top:371.02px">    <i>// Semafor := CreateSemaphore('nil', 0, 1, 'MY_APPLICATION_IS_RUNNING');</i></div>
<div class="ln" style="top:390.24px">546</div>
<div class="ln" style="top:409.96px">547</div>
<div class="code" style="top:410.46px">   <b>end</b><s>;</s></div>
<div class="ln" style="top:429.68px">548</div>
<div class="ln" style="top:449.40px">549</div>
<div class="code" style="top:449.90px"><b>procedure</b> testMutex<s>;</s></div>
<div class="ln" style="top:469.12px">550</div>
<div class="code" style="top:469.62px"> <b>var</b></div>
<div class="ln" style="top:488.84px">551</div>
<div class="code" style="top:489.34px"> vMutex<s>,</s> semafor<s>:</s> THandle<s>;</s></div>
<div class="ln" style="top:508.56px">552</div>
<div class="code" style="top:509.06px"><i>// jvappinst: TJvAppInstances;</i></div>
<svg style="left:0;top:151px" width="1024" height="379.5" viewBox="0 151 1024 379.5"><path d="M58.3 152.00V171.32" stroke="#8e8e8e" stroke-width="1.1"/><path d="M58.3 187.32V269.92" stroke="#8e8e8e" stroke-width="1.1"/><path d="M58.3 285.92V348.80" stroke="#8e8e8e" stroke-width="1.1"/><path d="M58.3 364.80V447.40" stroke="#8e8e8e" stroke-width="1.1"/><path d="M58.3 463.40V526.50" stroke="#8e8e8e" stroke-width="1.1"/><rect x="52.2" y="174.92" width="12.4" height="12.4" fill="#f8f8f8" stroke="#8e8e8e" stroke-width="1"/><path d="M54.8 181.12H62" stroke="#777" stroke-width="1"/><rect x="52.2" y="273.52" width="12.4" height="12.4" fill="#f8f8f8" stroke="#8e8e8e" stroke-width="1"/><path d="M54.8 279.72H62" stroke="#777" stroke-width="1"/><rect x="52.2" y="352.40" width="12.4" height="12.4" fill="#f8f8f8" stroke="#8e8e8e" stroke-width="1"/><path d="M54.8 358.60H62" stroke="#777" stroke-width="1"/><path d="M58.4 355.00V362.20" stroke="#777" stroke-width="1"/><rect x="52.2" y="451.00" width="12.4" height="12.4" fill="#f8f8f8" stroke="#8e8e8e" stroke-width="1"/><path d="M54.8 457.20H62" stroke="#777" stroke-width="1"/><path d="M58.3 418.36H65" stroke="#8e8e8e" stroke-width="1"/><path d="M97.32 211.16V270.32" stroke="#b8b8b8" stroke-width="1" stroke-dasharray="1 1"/><path d="M97.32 290.04V388.64" stroke="#b8b8b8" stroke-width="1" stroke-dasharray="1 1"/><path d="M124.74 290.04V368.92" stroke="#b8b8b8" stroke-width="1" stroke-dasharray="1 1"/><path d="M152.16 349.20V368.92" stroke="#b8b8b8" stroke-width="1" stroke-dasharray="1 1"/><rect x="527.2" y="352.8" width="30" height="15.6" fill="#fff" stroke="#a8a8a8" stroke-width="1"/><g fill="#8a8a8a"><circle cx="532.4" cy="360.4" r="0.9"/><circle cx="542.3" cy="360.4" r="0.9"/><circle cx="552.1" cy="360.4" r="0.9"/></g><path d="M25.5 390.6 L29.6 398 L21.4 398 Z" fill="#f2e200" stroke="#c8b400" stroke-width="1.2" stroke-linejoin="round"/><path d="M25.5 392.2V395.6M25.5 396.4v1" stroke="#1a1a1a" stroke-width="1.2"/></svg>
<div style="position:absolute;left:2px;top:551px;width:1020px;height:1px;background:#a8a8a8;"></div>
<div style="position:absolute;left:2px;top:552px;width:1020px;height:22.2px;background:#f0f0f0;"></div>
<div style="position:absolute;left:2px;top:574.1px;width:1020px;height:2.6px;background:#c6c6c6;"></div>
<div style="position:absolute;left:2px;top:576.6px;width:1020px;height:1.4px;background:#fcfcfc;"></div>
<div style="position:absolute;left:833.8px;top:553px;width:1px;height:20px;background:#d6d6d6;"></div>
<div style="position:absolute;left:834.8px;top:553px;width:1px;height:20px;background:#fafafa;"></div>
<div style="position:absolute;left:994px;top:553px;width:1px;height:20px;background:#d6d6d6;"></div>
<div style="position:absolute;left:995px;top:553px;width:1px;height:20px;background:#fafafa;"></div>
<div id="s1a" class="t" style="left:7px;top:549px;font:normal normal 14.2px/28.4px 'Liberation Sans',sans-serif;color:#111;letter-spacing:0.209px;transform:translate(0.45px,1.00px) scaleX(0.93);">maXbox5</div>
<div id="s1b" class="t" style="left:69px;top:549px;font:normal normal 14.2px/28.4px 'Liberation Sans',sans-serif;color:#111;letter-spacing:0.514px;transform:translate(0.20px,1.00px) scaleX(0.93);">C:\maxbox\maxbox4\maxbox4\web\crypt\</div>
<div id="s1c" class="t" style="left:327px;top:549px;font:normal normal 14.2px/28.4px 'Liberation Sans',sans-serif;color:#111;letter-spacing:-0.025px;transform:translate(0.80px,1.00px) scaleX(0.93);">650_drawdice2016_3tester_cryptbox5_64.txt</div>
<div id="s1d" class="t" style="left:594px;top:549px;font:normal normal 14.2px/28.4px 'Liberation Sans',sans-serif;color:#111;letter-spacing:0.312px;transform:translate(0.70px,1.00px) scaleX(0.93);">Compiled:</div>
<div id="s1e" class="t" style="left:659px;top:549px;font:normal normal 14.2px/28.4px 'Liberation Sans',sans-serif;color:#111;letter-spacing:0.556px;transform:translate(0.70px,1.00px) scaleX(0.93);">05/09/2023</div>
<div id="s1f" class="t" style="left:735px;top:549px;font:normal normal 14.2px/28.4px 'Liberation Sans',sans-serif;color:#111;letter-spacing:-0.071px;transform:translate(0.70px,1.00px) scaleX(0.93);">18:45:44</div>
<div id="s1g" class="t" style="left:794px;top:549px;font:normal normal 14.2px/28.4px 'Liberation Sans',sans-serif;color:#111;letter-spacing:0.833px;transform:translate(0.30px,1.00px) scaleX(0.93);">Mem:</div>
<div id="st2" class="t" style="left:841px;top:549px;font:normal normal 14.2px/28.4px 'Liberation Sans',sans-serif;color:#111;letter-spacing:-0.084px;transform:translate(0.40px,1.00px) scaleX(0.93);">Row:</div>
<div id="st3" class="t" style="left:889px;top:549px;font:normal normal 14.2px/28.4px 'Liberation Sans',sans-serif;color:#111;letter-spacing:0.125px;transform:translate(0.80px,1.00px) scaleX(0.93);">528</div>
<div id="st4" class="t" style="left:920px;top:549px;font:normal normal 14.2px/28.4px 'Liberation Sans',sans-serif;color:#111;letter-spacing:0.465px;transform:translate(0.10px,1.00px) scaleX(0.93);">--- Col:</div>
<div id="st5" class="t" style="left:974px;top:549px;font:normal normal 14.2px/28.4px 'Liberation Sans',sans-serif;color:#111;letter-spacing:0.000px;transform:translate(0.40px,1.00px) scaleX(0.93);">1</div>
<div id="st7" class="t" style="left:1001px;top:549px;font:normal normal 14.2px/28.4px 'Liberation Sans',sans-serif;color:#111;letter-spacing:0.000px;transform:translate(0.50px,1.00px) scaleX(0.93);">S</div>
<div id="s1h" class="t" style="left:831px;top:549px;font:normal normal 14.2px/28.4px 'Liberation Sans',sans-serif;color:#111;letter-spacing:0.000px;transform:translate(0.85px,1.00px) scaleX(0.93);clip-path:inset(0 3px 0 0);">(</div>
<div id="st6" class="t" style="left:988px;top:549px;font:normal normal 14.2px/28.4px 'Liberation Sans',sans-serif;color:#111;letter-spacing:0.000px;transform:translate(0.70px,1.00px) scaleX(0.93);clip-path:inset(0 4.6px 0 0);">S</div>
<div style="position:absolute;left:4px;top:577.9px;width:996.2px;height:142.8px;background:#000000;"></div>
<div style="position:absolute;left:2px;top:578px;width:2px;height:144px;background:#fafafa;"></div>
<div style="position:absolute;left:1000.5px;top:578px;width:21.5px;height:144px;background:#f0f0f0;"></div>
<div style="position:absolute;left:2px;top:720.7px;width:1020px;height:1.9px;background:#f6f6f6;"></div>
<div style="position:absolute;left:1006.8px;top:682px;width:8.2px;height:19px;background:#868686;"></div>
<div id="c1a" class="t" style="left:10px;top:575px;font:normal normal 17.5px/35.0px 'DejaVu Sans',sans-serif;color:#ffa500;letter-spacing:0.279px;transform:translate(0.40px,0.40px);">@ABCDEFGHIJKLMNOPQRSTUVWXYZ</div>
<div id="c1b" class="t" style="left:341px;top:575px;font:normal normal 17.5px/35.0px 'DejaVu Sans',sans-serif;color:#ffa500;letter-spacing:1.400px;transform:translate(0.20px,0.40px);">[\]^_`</div>
<div id="c1c" class="t" style="left:400px;top:575px;font:normal normal 17.5px/35.0px 'DejaVu Sans',sans-serif;color:#ffa500;letter-spacing:-0.240px;transform:translate(0.10px,0.40px);">abcdefghijklmnopqrstuvwxyz</div>
<div id="c1d" class="t" style="left:649px;top:575px;font:normal normal 17.5px/35.0px 'DejaVu Sans',sans-serif;color:#ffa500;letter-spacing:0.333px;transform:translate(0.60px,0.40px);">{|}~</div>
<div id="c1f" class="t" style="left:704px;top:575px;font:normal normal 17.5px/35.0px 'DejaVu Sans',sans-serif;color:#ffa500;letter-spacing:0.861px;transform:translate(0.60px,0.40px);">¡¢£¤¥¦§¨©ª«¬-®¯°±²³</div>
<div id="c2a" class="t" style="left:10px;top:598px;font:normal normal 17.5px/35.0px 'DejaVu Sans',sans-serif;color:#ffa500;letter-spacing:1.614px;transform:translate(0.75px,1.00px);">´µ¶·¸¹º»¼½¾¿</div>
<div id="c2b" class="t" style="left:160px;top:598px;font:normal normal 17.5px/35.0px 'DejaVu Sans',sans-serif;color:#ffa500;letter-spacing:0.568px;transform:translate(0.00px,1.00px);">ÀÁÂÃÄÅÆÇÈÉÊËÌÍÎÏÐÑÒÓÔÕÖ</div>
<div id="c2c" class="t" style="left:434px;top:598px;font:normal normal 17.5px/35.0px 'DejaVu Sans',sans-serif;color:#ffa500;letter-spacing:0.000px;transform:translate(0.35px,1.00px);">×</div>
<div id="c2d" class="t" style="left:448px;top:598px;font:normal normal 17.5px/35.0px 'DejaVu Sans',sans-serif;color:#ffa500;letter-spacing:-0.100px;transform:translate(0.55px,1.00px);">ØÙÚÛÜÝÞßàáâãäåæçèéêëìíîïðñòóôõö</div>
<div id="c2e" class="t" style="left:770px;top:598px;font:normal normal 17.5px/35.0px 'DejaVu Sans',sans-serif;color:#ffa500;letter-spacing:0.000px;transform:translate(0.65px,1.00px);">÷</div>
<div id="c2f" class="t" style="left:786px;top:598px;font:normal normal 17.5px/35.0px 'DejaVu Sans',sans-serif;color:#ffa500;letter-spacing:0.322px;transform:translate(0.50px,1.00px);">øùúûüýþÿ</div>
<div id="c3" class="t" style="left:10px;top:622px;font:normal normal 17.5px/35.0px 'DejaVu Sans',sans-serif;color:#ffa500;letter-spacing:-0.404px;transform:translate(0.15px,0.60px);">3.000000000000</div>
<div id="c4b" class="t" style="left:74px;top:646px;font:normal normal 17.5px/35.0px 'DejaVu Sans',sans-serif;color:#ffa500;letter-spacing:-0.125px;transform:translate(0.70px,0.20px);">mX5</div>
<div id="c4c" class="t" style="left:120px;top:646px;font:normal normal 17.5px/35.0px 'DejaVu Sans',sans-serif;color:#ffa500;letter-spacing:0.062px;transform:translate(0.00px,0.20px);">executed:</div>
<div id="c4d" class="t" style="left:213px;top:646px;font:normal normal 17.5px/35.0px 'DejaVu Sans',sans-serif;color:#ffa500;letter-spacing:-0.084px;transform:translate(0.00px,0.20px);">05/09/2023</div>
<div id="c4e" class="t" style="left:319px;top:646px;font:normal normal 17.5px/35.0px 'DejaVu Sans',sans-serif;color:#ffa500;letter-spacing:-0.464px;transform:translate(0.25px,0.20px);">18:45:44</div>
<div id="c4f" class="t" style="left:408px;top:646px;font:normal normal 17.5px/35.0px 'DejaVu Sans',sans-serif;color:#ffa500;letter-spacing:0.285px;transform:translate(0.55px,0.20px);">Runtime:</div>
<div id="c4g" class="t" style="left:495px;top:646px;font:normal normal 17.5px/35.0px 'DejaVu Sans',sans-serif;color:#ffa500;letter-spacing:0.124px;transform:translate(0.30px,0.20px);">0:0:0.434</div>
<div id="c4h" class="t" style="left:590px;top:646px;font:normal normal 17.5px/35.0px 'DejaVu Sans',sans-serif;color:#ffa500;letter-spacing:0.035px;transform:translate(0.55px,0.20px);">Memload:</div>
<div id="c4i" class="t" style="left:683px;top:646px;font:normal normal 17.5px/35.0px 'DejaVu Sans',sans-serif;color:#ffa500;letter-spacing:-0.250px;transform:translate(0.10px,0.20px);">67</div>
<div id="c4j" class="t" style="left:729px;top:646px;font:normal normal 17.5px/35.0px 'DejaVu Sans',sans-serif;color:#ffa500;letter-spacing:0.300px;transform:translate(0.50px,0.20px);">use</div>
<div id="c5a" class="t" style="left:9px;top:669px;font:normal normal 17.5px/35.0px 'DejaVu Sans',sans-serif;color:#ffa500;letter-spacing:-0.056px;transform:translate(0.15px,0.70px);">RemObjects</div>
<div id="c5b" class="t" style="left:120px;top:669px;font:normal normal 17.5px/35.0px 'DejaVu Sans',sans-serif;color:#ffa500;letter-spacing:0.050px;transform:translate(0.15px,0.70px);">Pascal</div>
<div id="c5c" class="t" style="left:180px;top:669px;font:normal normal 17.5px/35.0px 'DejaVu Sans',sans-serif;color:#ffa500;letter-spacing:-0.125px;transform:translate(0.60px,0.70px);">Script.</div>
<div id="c5d" class="t" style="left:243px;top:669px;font:normal normal 17.5px/35.0px 'DejaVu Sans',sans-serif;color:#ffa500;letter-spacing:-0.531px;transform:translate(0.00px,0.70px);">Copyright</div>
<div id="c5f" class="t" style="left:362px;top:669px;font:normal normal 17.5px/35.0px 'DejaVu Sans',sans-serif;color:#ffa500;letter-spacing:-0.499px;transform:translate(0.75px,0.70px);">2004-2024</div>
<div id="c5g" class="t" style="left:460px;top:669px;font:normal normal 17.5px/35.0px 'DejaVu Sans',sans-serif;color:#ffa500;letter-spacing:-1.250px;transform:translate(0.80px,0.70px);">by</div>
<div id="c5h" class="t" style="left:485px;top:669px;font:normal normal 17.5px/35.0px 'DejaVu Sans',sans-serif;color:#ffa500;letter-spacing:0.084px;transform:translate(0.95px,0.70px);">RemObjects</div>
<div id="c5i" class="t" style="left:598px;top:669px;font:normal normal 17.5px/35.0px 'DejaVu Sans',sans-serif;color:#ffa500;letter-spacing:-0.000px;transform:translate(0.00px,0.70px);">Software</div>
<div id="c5j" class="t" style="left:681px;top:669px;font:normal normal 17.5px/35.0px 'DejaVu Sans',sans-serif;color:#ffa500;letter-spacing:0.000px;transform:translate(0.20px,0.70px);">&amp;</div>
<div id="c5k" class="t" style="left:700px;top:669px;font:normal normal 17.5px/35.0px 'DejaVu Sans',sans-serif;color:#ffa500;letter-spacing:-0.125px;transform:translate(0.20px,0.70px);">maXbox5</div>
<div id="c4a" class="t" style="left:10px;top:640px;font:normal normal 20.7px/41.4px 'DejaVu Sans',sans-serif;color:#ffa500;letter-spacing:0.075px;transform:translate(0.20px,0.20px);">□□□</div>
<div id="c4k" class="t" style="left:703px;top:646px;font:normal normal 17.5px/35.0px 'DejaVu Sans',sans-serif;color:#ffa500;letter-spacing:0.000px;transform:translate(0.00px,0.20px) scaleX(1.31);">%</div>
<div id="c5e" class="t" style="left:331px;top:669px;font:normal normal 17.5px/35.0px 'DejaVu Sans',sans-serif;color:#ffa500;letter-spacing:-0.200px;transform:translate(0.55px,0.70px) scaleX(1.14);">(c)</div>
<div id="c1e" class="t" style="left:693px;top:582px;font:normal normal 10.7px/21.4px 'DejaVu Sans',sans-serif;color:#ffa500;letter-spacing:0.000px;transform:translate(0.65px,0.90px) scaleX(0.8);">▯</div>
</div>
</body></html>
